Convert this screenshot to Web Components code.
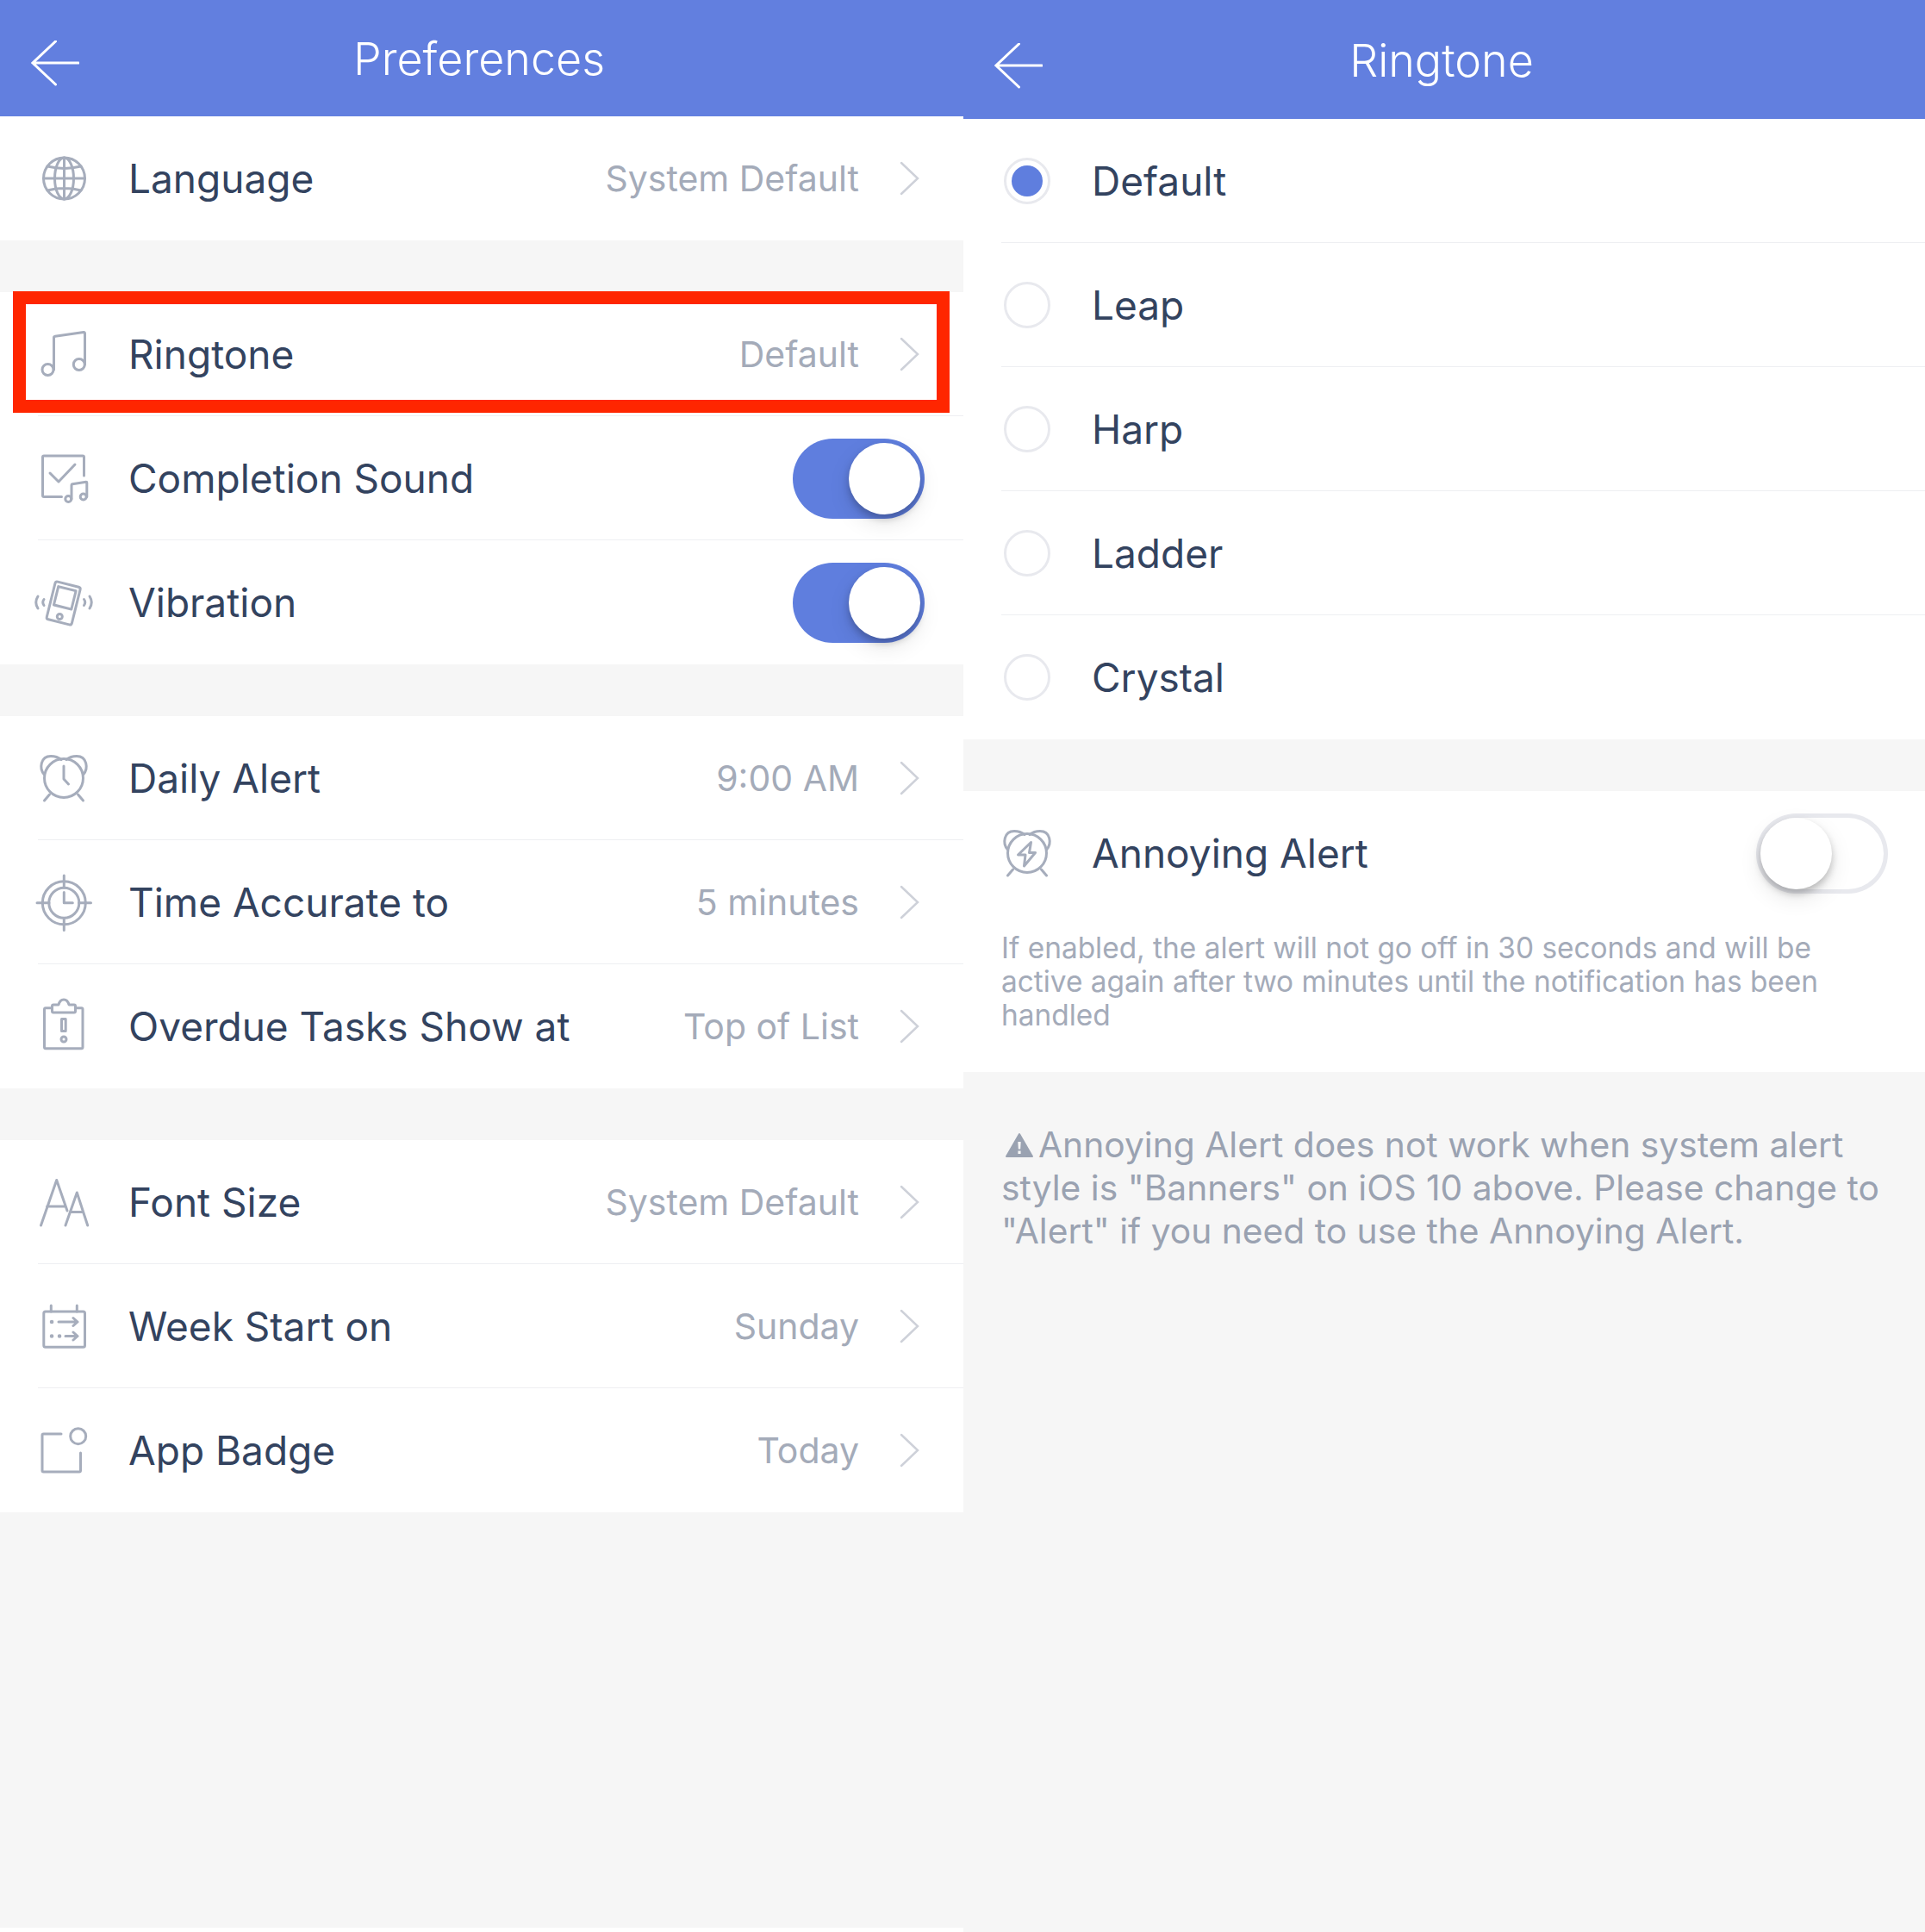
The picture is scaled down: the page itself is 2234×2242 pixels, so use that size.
<!DOCTYPE html>
<html>
<head>
<meta charset="utf-8">
<title>Preferences</title>
<style>
  html, body { margin: 0; padding: 0; background: #fff; }
  body { width: 2234px; height: 2242px; overflow: hidden; font-family: Inter, "Liberation Sans", sans-serif; color: #33435f; }
  #stage { display: flex; align-items: flex-start; }
  pref-group + pref-group, pref-group + warn-note { margin-top: 60px; }
</style>
</head>
<body>
<div id="stage">
  <app-screen style="--w:1118px; --h:2237px; --toggle-right:45px">
    <nav-bar title="Preferences" h="135"></nav-bar>
    <pref-group>
      <pref-row icon="globe" label="Language" value="System Default"></pref-row>
    </pref-group>
    <pref-group>
      <pref-row icon="note" label="Ringtone" value="Default"></pref-row>
      <pref-row icon="checknote" label="Completion Sound" toggle="on"></pref-row>
      <pref-row icon="phone" label="Vibration" toggle="on"></pref-row>
      <red-mark></red-mark>
    </pref-group>
    <pref-group>
      <pref-row icon="alarm" label="Daily Alert" value="9:00 AM"></pref-row>
      <pref-row icon="target" label="Time Accurate to" value="5 minutes"></pref-row>
      <pref-row icon="clip" label="Overdue Tasks Show at" value="Top of List"></pref-row>
    </pref-group>
    <pref-group>
      <pref-row icon="fontsize" label="Font Size" value="System Default"></pref-row>
      <pref-row icon="calendar" label="Week Start on" value="Sunday"></pref-row>
      <pref-row icon="badge" label="App Badge" value="Today"></pref-row>
    </pref-group>
  </app-screen>
  <app-screen style="--w:1116px; --h:2242px; --toggle-right:43px">
    <nav-bar title="Ringtone" h="138"></nav-bar>
    <pref-group>
      <radio-row label="Default" checked></radio-row>
      <radio-row label="Leap"></radio-row>
      <radio-row label="Harp"></radio-row>
      <radio-row label="Ladder"></radio-row>
      <radio-row label="Crystal"></radio-row>
    </pref-group>
    <pref-group>
      <pref-row icon="alarmbolt" label="Annoying Alert" toggle="off"></pref-row>
      <help-note>If enabled, the alert will not go off in 30 seconds and will be active again after two minutes until the notification has been handled</help-note>
    </pref-group>
    <warn-note>Annoying Alert does not work when system alert style is "Banners" on iOS 10 above. Please change to "Alert" if you need to use the Annoying Alert.</warn-note>
  </app-screen>
</div>

<script>
// icons are drawn on a 72x72 box, same stroke for all of them
const ALARM_BODY = `<circle cx="36" cy="36" r="22.5"/>
  <path d="M19.5 55l-6 7M52.500 55l6 7"/>
  <path d="M13.500 32C7 25 9 10.500 21 10.500c5 0 9 1.500 12 4M58.500 32C65 25 63 10.500 51 10.500c-5 0-9 1.500-12 4"/>`;

const ICONS = {
  globe: `<circle cx="36.500" cy="36" r="24"/><ellipse cx="36.500" cy="36" rx="11" ry="24"/><path d="M36.500 12v48M12.500 36h48M17 22c12 3 27 3 39 0M17 50c12-3 27-3 39 0"/>`,
  note: `<circle cx="17.500" cy="54" r="6.500"/><circle cx="53.800" cy="48" r="6.500"/><path d="M24.500 54V17c0-1 .5-1.500 1.500-1.700L59 10.500c1-.1 1.500.3 1.500 1.500v36"/>`,
  checknote: `<path d="M33.500 57.500H13c-1 0-1.500-.5-1.500-1.500V11.500c0-1 .5-1.500 1.500-1.500h45c1 0 1.500.5 1.500 1.500V33"/><path d="M20 30l10 10 19-20"/><circle cx="41.300" cy="60" r="3.500"/><circle cx="58.700" cy="57.500" r="3.500"/><path d="M45 60V44c0-.8.3-1.200 1-1.300l16-2.500c.5 0 .8.2.8.8v16.500"/>`,
  phone: `<rect x="20.700" y="14.500" width="30" height="45" rx="2.500" transform="rotate(14 35.700 37)"/><rect x="26.800" y="19.800" width="21" height="22" transform="rotate(14 37.300 30.800)"/><circle cx="31.300" cy="52.500" r="3"/><path d="M13 32.500q-2.500 3.500 0 7M6 29q-4.500 7 0 14M59.500 32.500q2.500 3.500 0 7M66 29q4.500 7 0 14"/>`,
  alarm: `${ALARM_BODY}<path d="M36 22v15l5.500 6"/>`,
  alarmbolt: `${ALARM_BODY}<path d="M40.500 23.500L25.500 38H34l-1.500 13 13-15.500h-7z"/>`,
  target: `<circle cx="36.300" cy="36.800" r="25"/><circle cx="36.300" cy="36.800" r="17.500"/><path d="M36.300 5v14M36.300 54.500v14M5 36.800h14M53.500 36.800h14M36.300 24.500v12.300h10"/>`,
  clip: `<path d="M22.500 14.700H15c-1 0-1.500.5-1.500 1.500v44c0 1 .5 1.500 1.500 1.500h41.500c1 0 1.500-.5 1.500-1.500v-44c0-1-.5-1.500-1.500-1.500H50"/><path d="M24 11h6c1-4 3.500-6 6-6s5 2 6 6h6c1.200 0 1.500.5 1.500 1.500v6c0 1-.5 1.500-1.500 1.500H24c-1 0-1.500-.5-1.500-1.500v-6c0-1 .5-1.500 1.500-1.500z"/><rect x="33.500" y="27.500" width="4.700" height="14"/><circle cx="36" cy="51" r="3"/>`,
  fontsize: `<path d="M9.500 63L27.700 10.500 40 46M16.500 41H37M38 63l13.300-38 12.400 38M44 47.500h14.500"/>`,
  calendar: `<rect x="12.800" y="19" width="47.700" height="41.300" rx="2"/><path d="M21.300 12v7M51.300 12v7M30 31h22M47 26.500l5 4.500-5 4.500M38 47.500h14M47 43l5 4.500-5 4.500"/><path d="M22 31h.1M22 47.500h.1M31 47.500h.1" stroke-width="4.500"/>`,
  badge: `<path d="M33 17H12.500c-1 0-1.500.5-1.500 1.500v41c0 1 .5 1.500 1.500 1.500H54c1 0 1.500-.5 1.500-1.500V39"/><circle cx="52.700" cy="19.700" r="9"/>`
};

class AppScreen extends HTMLElement {
  connectedCallback() {
    this.attachShadow({ mode: 'open' });
    this.shadowRoot.innerHTML = `
      <style>
        :host { display: block; width: var(--w); height: var(--h); background: #f6f6f6; }
      </style>
      <slot></slot>`;
  }
}

class NavBar extends HTMLElement {
  connectedCallback() {
    const h = +this.getAttribute('h');
    this.attachShadow({ mode: 'open' });
    this.shadowRoot.innerHTML = `
      <style>
        :host { display: flex; align-items: center; justify-content: center; position: relative; height: ${h}px; background: #627fdf; color: #fff; }
        svg { position: absolute; left: 36px; top: ${h - 88}px; }
        span { font: 300 52px Inter, "Liberation Sans", sans-serif; padding: ${h === 135 ? 1 : 3}px 6px 0 0; }
      </style>
      <svg width="56" height="54" viewBox="0 0 56 54" fill="none" stroke="#fff" stroke-width="3" stroke-linecap="round">
        <path d="M55 26H2M28.500 1L2 26l26.500 25"/>
      </svg>
      <span>${this.getAttribute('title')}</span>`;
  }
}

class PrefGroup extends HTMLElement {
  connectedCallback() {
    this.attachShadow({ mode: 'open' });
    this.shadowRoot.innerHTML = `
      <style>:host { display: block; position: relative; background: #fff; }</style>
      <slot></slot>`;
  }
}

class ToggleSwitch extends HTMLElement {
  connectedCallback() {
    const on = this.getAttribute('state') === 'on';
    this.attachShadow({ mode: 'open' });
    this.shadowRoot.innerHTML = `
      <style>
        :host { display: flex; box-sizing: border-box; width: 153px; height: 93px; margin-top: 2px; border-radius: 47px; padding: 5px;
                justify-content: ${on ? 'flex-end' : 'flex-start'}; background: ${on ? '#5f7ede' : '#fff'};
                ${on ? '' : 'box-shadow: inset 0 0 0 5px #e8e9ee;'} }
        i { display: block; width: 83px; height: 83px; border-radius: 50%; background: #fff;
            box-shadow: 0 5px 9px rgba(0,0,0,.22), 0 10px 26px rgba(0,0,0,.1); }
      </style>
      <i></i>`;
  }
}

class PrefRow extends HTMLElement {
  connectedCallback() {
    const toggle = this.getAttribute('toggle');
    const tail = toggle
      ? `<toggle-switch state="${toggle}"></toggle-switch>`
      : `<em>${this.getAttribute('value')}</em>
         <svg width="24" height="40" viewBox="0 0 24 40" fill="none" stroke="#ced1d9" stroke-width="2.500" stroke-linecap="round"><path d="M3 2l19 18L3 38"/></svg>`;
    this.attachShadow({ mode: 'open' });
    this.shadowRoot.innerHTML = `
      <style>
        :host { display: block; padding-left: 44px; }
        .row { display: flex; align-items: center; height: 143px; padding-right: ${toggle ? 'var(--toggle-right)' : '51px'}; border-bottom: 1px solid #eeeff2; }
        :host(:last-of-type) .row { border-bottom-color: transparent; }
        svg.ic { width: 72px; height: 72px; margin-left: -6px; flex: none; overflow: visible; fill: none; stroke: #a6adbc; stroke-width: 3; stroke-linecap: round; stroke-linejoin: round; }
        b { font: 400 46px Inter, "Liberation Sans", sans-serif; color: #33435f; margin-left: 39px; flex: 1; white-space: nowrap; }
        em { font: 400 41px Inter, "Liberation Sans", sans-serif; color: #a4abb9; margin-right: 46px; white-space: nowrap; }
      </style>
      <div class="row">
        <svg class="ic" viewBox="0 0 72 72">${ICONS[this.getAttribute('icon')]}</svg>
        <b>${this.getAttribute('label')}</b>
        ${tail}
      </div>`;
  }
}

class RadioRow extends HTMLElement {
  connectedCallback() {
    const checked = this.hasAttribute('checked');
    this.attachShadow({ mode: 'open' });
    this.shadowRoot.innerHTML = `
      <style>
        :host { display: block; padding-left: 44px; }
        .row { display: flex; align-items: center; height: 143px; border-bottom: 1px solid #eeeff2; }
        :host(:last-of-type) .row { border-bottom-color: transparent; }
        .dot { box-sizing: border-box; width: 54px; height: 54px; margin-left: 3px; flex: none; border-radius: 50%; border: 3.5px solid #e8e9ee;
               display: flex; align-items: center; justify-content: center; }
        .dot i { display: ${checked ? 'block' : 'none'}; width: 36px; height: 36px; border-radius: 50%; background: #5f7ede; }
        b { font: 400 46px Inter, "Liberation Sans", sans-serif; color: #33435f; margin-left: 48px; }
      </style>
      <div class="row">
        <div class="dot"><i></i></div>
        <b>${this.getAttribute('label')}</b>
      </div>`;
  }
}

class HelpNote extends HTMLElement {
  connectedCallback() {
    this.attachShadow({ mode: 'open' });
    this.shadowRoot.innerHTML = `
      <style>
        :host { display: block; padding: 19px 44px 46px; font: 400 33.4px/39px Inter, "Liberation Sans", sans-serif; color: #a4abb9; }
      </style>
      <slot></slot>`;
  }
}

class WarnNote extends HTMLElement {
  connectedCallback() {
    this.attachShadow({ mode: 'open' });
    this.shadowRoot.innerHTML = `
      <style>
        :host { display: block; padding: 0 44px; font: 400 40.75px/50px Inter, "Liberation Sans", sans-serif; color: #9aa2b1; }
        svg { width: 32px; height: 29px; margin: 0 6px 0 5px; }
      </style>
      <svg viewBox="0 0 32 29"><path fill="#9aa2b1" stroke="#9aa2b1" stroke-width="2" stroke-linejoin="round" d="M16 2L31 28H1z"/><path fill="#f6f6f6" d="M14.300 11h3.400l-.5 8.500h-2.400zM14.400 21.500h3.200v3.500h-3.200z"/></svg><slot></slot>`;
  }
}

// the red highlight that lies over the Ringtone row
class RedMark extends HTMLElement {
  connectedCallback() {
    this.attachShadow({ mode: 'open' });
    this.shadowRoot.innerHTML = `
      <style>
        :host { display: block; position: absolute; box-sizing: border-box; left: 15px; top: -1px; width: 1087px; height: 141px; border: 15px solid #ff2600; pointer-events: none; }
      </style>`;
  }
}

customElements.define('app-screen', AppScreen);
customElements.define('nav-bar', NavBar);
customElements.define('pref-group', PrefGroup);
customElements.define('toggle-switch', ToggleSwitch);
customElements.define('pref-row', PrefRow);
customElements.define('radio-row', RadioRow);
customElements.define('help-note', HelpNote);
customElements.define('warn-note', WarnNote);
customElements.define('red-mark', RedMark);
</script>
</body>
</html>
